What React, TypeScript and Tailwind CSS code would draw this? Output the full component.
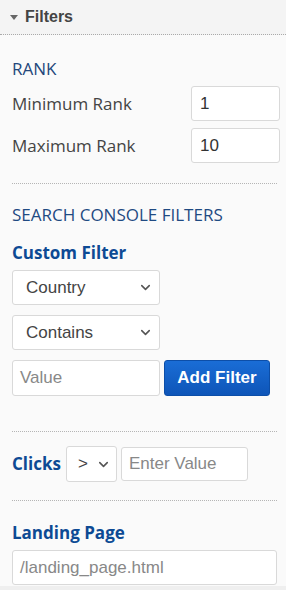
import { ChevronDown } from 'lucide-react';

function Select({ value, width }: { value: string; width: string }) {
  return (
    <div
      className={`${width} h-[35px] flex items-center justify-between pl-[13px] pr-[6px] bg-white border border-[#d9d9d9] rounded-[3px] text-[17px] text-[#444] font-['Liberation_Sans',Arial,sans-serif]`}
    >
      <span>{value}</span>
      <ChevronDown className="w-[15px] h-[15px] text-[#555]" strokeWidth={2.5} />
    </div>
  );
}

function Divider({ mt }: { mt: string }) {
  return <div className={`${mt} border-t border-dotted border-[#b5b5b5]`} />;
}

export default function App() {
  return (
    <div className="w-[286px] h-[590px] bg-[#efefef] font-['Open_Sans',sans-serif]">
      <div className="h-[586px] bg-[#fafafa]">
        <div className="h-[35px] bg-[#f4f4f4] border-b border-dotted border-[#aaa] flex items-center pl-[10px] gap-[7px]">
          <svg width="8" height="6" viewBox="0 0 8 6" className="mt-[1px]">
            <path d="M0 0 L8 0 L4 5 Z" fill="#666" />
          </svg>
          <span className="text-[16px] font-bold text-[#444] font-['Liberation_Sans',Arial,sans-serif]">Filters</span>
        </div>

        <div className="pl-3 pr-[9px]">
          <div className="mt-[24px] text-[17px] leading-[20px] text-[#23477a]">RANK</div>

          <div className="mt-[7px] flex items-center justify-between">
            <span className="text-[17px] text-[#444]">Minimum Rank</span>
            <div className="w-[89px] h-[35px] mr-[-3px] bg-white border border-[#d9d9d9] rounded-[3px] flex items-center pl-[8px] text-[17px] text-[#333] font-['Liberation_Sans',Arial,sans-serif]">1</div>
          </div>
          <div className="mt-[7px] flex items-center justify-between">
            <span className="text-[17px] text-[#444]">Maximum Rank</span>
            <div className="w-[89px] h-[35px] mr-[-3px] bg-white border border-[#d9d9d9] rounded-[3px] flex items-center pl-[8px] text-[17px] text-[#333] font-['Liberation_Sans',Arial,sans-serif]">10</div>
          </div>

          <Divider mt="mt-[20px]" />

          <div className="mt-[21px] text-[17px] leading-[20px] text-[#1f4a82]">SEARCH CONSOLE FILTERS</div>
          <div className="mt-[18px] text-[17px] leading-[20px] font-bold text-[#0d4a94]">Custom Filter</div>

          <div className="mt-[7px]">
            <Select value="Country" width="w-[148px]" />
          </div>
          <div className="mt-[10px]">
            <Select value="Contains" width="w-[148px]" />
          </div>
          <div className="mt-[10px] flex gap-[4px]">
            <div className="w-[148px] h-[36px] bg-white border border-[#d9d9d9] rounded-[3px] flex items-center pl-[7px] text-[17px] text-[#888] font-['Liberation_Sans',Arial,sans-serif]">Value</div>
            <button className="w-[106px] h-[36px] rounded-[3px] bg-gradient-to-b from-[#1a6dd6] to-[#0e55b8] border border-[#0c4ea8] text-white font-bold text-[17px] font-['Liberation_Sans',Arial,sans-serif]">
              Add Filter
            </button>
          </div>

          <Divider mt="mt-[35px]" />

          <div className="mt-[14px] flex items-center">
            <span className="text-[17px] font-bold text-[#0d4a94]">Clicks</span>
            <div className="ml-[5px] w-[51px] h-[36px] bg-white border border-[#d9d9d9] rounded-[3px] flex items-center justify-between pl-[11px] pr-[5px] text-[17px] text-[#444] font-['Liberation_Sans',Arial,sans-serif]">
              <span>&gt;</span>
              <ChevronDown className="w-[15px] h-[15px] text-[#555]" strokeWidth={2.5} />
            </div>
            <div className="ml-[4px] w-[127px] h-[34px] bg-white border border-[#d9d9d9] rounded-[3px] flex items-center pl-[7px] text-[17px] text-[#888] font-['Liberation_Sans',Arial,sans-serif]">
              Enter Value
            </div>
          </div>

          <Divider mt="mt-[18px]" />

          <div className="mt-[22px] text-[17px] leading-[20px] font-bold text-[#0d4a94]">Landing Page</div>
          <div className="mt-[7px] h-[35px] bg-white border border-[#d9d9d9] rounded-[3px] flex items-center pl-[7px] text-[17px] text-[#888] font-['Liberation_Sans',Arial,sans-serif]">
            /landing_page.html
          </div>
        </div>
      </div>
    </div>
  );
}
